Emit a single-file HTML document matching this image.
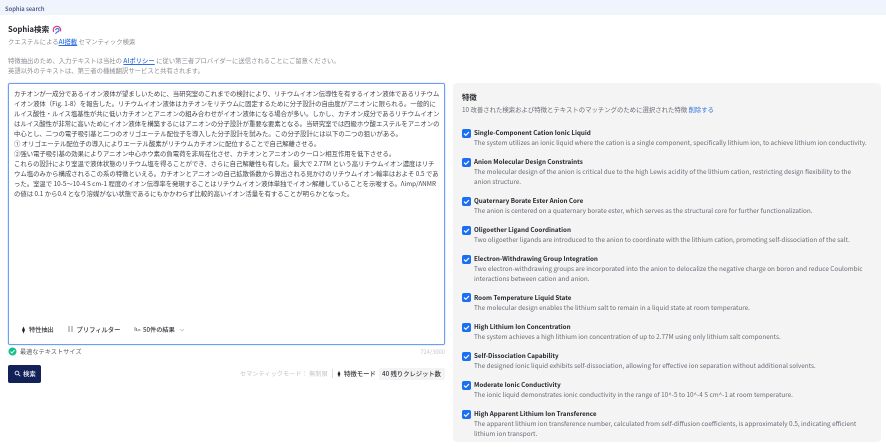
<!DOCTYPE html>
<html lang="ja"><head><meta charset="utf-8"><title>Sophia search</title>
<style>
html,body{margin:0;padding:0;background:#fff}
body{width:886px;height:447px;position:relative;overflow:hidden;font-family:"Noto Sans CJK JP","Liberation Sans",sans-serif;color:#333;}
#w{position:absolute;left:0;top:0;width:886px;height:447px;filter:blur(.25px)}
.a{position:absolute;white-space:nowrap;line-height:10px}
.l{position:absolute;left:14px;white-space:nowrap;font-size:6.37px;line-height:10px;color:#3f434a}
.t{position:absolute;left:474px;white-space:nowrap;font-size:6.25px;line-height:10px;font-weight:700;color:#26282d}
.d{position:absolute;left:474px;white-space:nowrap;font-size:6.37px;line-height:10px;color:#686c73}
.c{position:absolute;left:461.5px;width:9px;height:9px;background:#1b6ff2;border-radius:2px}
.c svg{position:absolute;left:0;top:0}
a{color:#2f6fe0;text-decoration:underline}
</style></head><body><div id="w">
<div class="a" style="left:0;top:0;width:886px;height:15px;background:#eff4fd"></div>
<div class="a" style="left:5px;top:3.5px;font-size:5.9px;color:#3f4a78;font-weight:500">Sophia search</div>
<div class="a" style="left:8px;top:24.5px;font-size:7.6px;font-weight:700;color:#26282d">Sophia検索</div>
<svg style="position:absolute;left:51.5px;top:24.5px" width="10" height="10" viewBox="0 0 10 10"><path d="M1.8 7A3.7 3.7 0 1 1 8.4 6.4" fill="none" stroke="#d8408f" stroke-width="1.2"/><path d="M3.6 5.2A1.7 1.7 0 1 1 5.2 6.9L3.4 8.8" fill="none" stroke="#3c6be0" stroke-width="1.1"/></svg>
<div class="a" style="left:8px;top:36.5px;font-size:6.35px;color:#8a8d93">クエステルによる<a href="#" style="font-weight:500">AI搭載</a> セマンティック検索</div>
<div class="a" style="left:8px;top:56px;font-size:6.35px;color:#8a8d93">特徴抽出のため、入力テキストは当社の <a href="#" style="font-weight:500">AIポリシー</a> に従い第三者プロバイダーに送信されることにご留意ください。</div>
<div class="a" style="left:8px;top:65.5px;font-size:6.35px;color:#8a8d93">英語以外のテキストは、第三者の機械翻訳サービスと共有されます。</div>

<div class="a" style="left:8px;top:83px;width:435px;height:260px;border:1px solid #6e9df5;border-radius:2px;box-shadow:0 0 0 .3px #a9c5f8"></div>
<div class="l" style="top:89px">カチオンが一成分であるイオン液体が望ましいために、当研究室のこれまでの検討により、リチウムイオン伝導性を有するイオン液体であるリチウム</div>
<div class="l" style="top:99px">イオン液体（Fig. 1-8）を報告した。リチウムイオン液体はカチオンをリチウムに固定するために分子設計の自由度がアニオンに限られる。一般的に</div>
<div class="l" style="top:109px">ルイス酸性・ルイス塩基性が共に低いカチオンとアニオンの組み合わせがイオン液体になる場合が多い。しかし、カチオン成分であるリチウムイオン</div>
<div class="l" style="top:119px">はルイス酸性が非常に高いためにイオン液体を構築するにはアニオンの分子設計が重要な要素となる。当研究室では四級ホウ酸エステルをアニオンの</div>
<div class="l" style="top:129px">中心とし、二つの電子吸引基と二つのオリゴエーテル配位子を導入した分子設計を試みた。この分子設計には以下の二つの狙いがある。</div>
<div class="l" style="top:139px">① オリゴエーテル配位子の導入によりエーテル酸素がリチウムカチオンに配位することで自己解離させる。</div>
<div class="l" style="top:149px">②強い電子吸引基の効果によりアニオン中心ホウ素の負電荷を非局在化させ、カチオンとアニオンのクーロン相互作用を低下させる。</div>
<div class="l" style="top:159px">これらの設計により室温で液体状態のリチウム塩を得ることができ、さらに自己解離性も有した。最大で 2.77M という高リチウムイオン濃度はリチ</div>
<div class="l" style="top:169px">ウム塩のみから構成されるこの系の特徴といえる。カチオンとアニオンの自己拡散係数から算出される見かけのリチウムイオン輸率はおよそ 0.5 であ</div>
<div class="l" style="top:179px">った。室温で 10-5～10-4 S cm-1 程度のイオン伝導率を発現することはリチウムイオン液体単独でイオン解離していることを示唆する。Λimp/ΛNMR</div>
<div class="l" style="top:189px">の値は 0.1 から0.4 となり溶媒がない状態であるにもかかわらず比較的高いイオン活量を有することが明らかとなった。</div>

<svg style="position:absolute;left:20px;top:326px" width="7" height="8" viewBox="0 0 7 8"><path d="M3.5 .5L5 4 3.5 7.5 2 4Z" fill="#222"/></svg>
<div class="a" style="left:29px;top:325px;font-size:6.2px;font-weight:500;color:#33363b">特性抽出</div>
<svg style="position:absolute;left:67px;top:326px" width="7" height="7" viewBox="0 0 7 7"><path d="M1 1H3M4 1H6M1 3H3M4 3H6M1 5H3M4 5H6" stroke="#888" stroke-width=".9"/></svg>
<div class="a" style="left:76.5px;top:325px;font-size:6.3px;font-weight:500;color:#33363b">プリフィルター</div>
<svg style="position:absolute;left:134px;top:326px" width="7" height="7" viewBox="0 0 7 7"><path d="M1 1V5M2.5 2V5M3.5 5L5 3.5 6.5 4.5" stroke="#777" stroke-width=".8" fill="none"/></svg>
<div class="a" style="left:143px;top:325px;font-size:6.2px;font-weight:500;color:#33363b">50件の結果</div>
<svg style="position:absolute;left:179px;top:328px" width="6" height="4" viewBox="0 0 6 4"><path d="M1 1L3 3 5 1" stroke="#bbb" stroke-width=".7" fill="none"/></svg>

<svg style="position:absolute;left:8px;top:347px" width="9" height="9" viewBox="0 0 9 9"><circle cx="4.5" cy="4.5" r="4" fill="#13c08a"/><path d="M2.5 4.6L4 6 6.6 3.2" stroke="#fff" stroke-width="1" fill="none"/></svg>
<div class="a" style="left:20px;top:347px;font-size:6.2px;color:#5c5f66">最適なテキストサイズ</div>
<div class="a" style="right:441px;top:347px;font-size:5.8px;color:#c4c6ca">724/3000</div>

<div class="a" style="left:8px;top:365px;width:33px;height:18px;background:#122258;border-radius:2px"></div>
<svg style="position:absolute;left:14px;top:370px" width="7" height="7" viewBox="0 0 7 7"><circle cx="3" cy="3" r="1.9" fill="none" stroke="#fff" stroke-width=".8"/><path d="M4.4 4.4L6.2 6.2" stroke="#fff" stroke-width=".8"/></svg>
<div class="a" style="left:23px;top:369px;font-size:6.4px;font-weight:500;color:#fff">検索</div>

<div class="a" style="left:240px;top:369px;font-size:6.2px;color:#c2c4c8">セマンティックモード： 無制限</div>
<div class="a" style="left:332px;top:369px;width:.6px;height:9px;background:#ddd"></div>
<svg style="position:absolute;left:336px;top:370px" width="6" height="8" viewBox="0 0 6 8"><path d="M3 .8L4.4 4 3 7.2 1.6 4Z" fill="#222"/></svg>
<div class="a" style="left:344px;top:369px;font-size:6.4px;font-weight:500;color:#33363b">特徴モード</div>
<div class="a" style="left:379px;top:368px;width:66px;height:12px;background:#f3f3f4;border-radius:2px"></div>
<div class="a" style="left:382px;top:369px;font-size:6.3px;font-weight:500;color:#33363b">40 残りクレジット数</div>

<div class="a" style="left:453px;top:83px;width:428px;height:359px;background:#f4f4f5;border-radius:4px"></div>
<div class="a" style="left:462px;top:92.5px;font-size:7.4px;font-weight:700;color:#26282d">特徴</div>
<div class="a" style="left:462px;top:104.5px;font-size:6.38px;color:#6b6e75">10 改善された検索および特徴とテキストのマッチングのために選択された特徴 <span style="color:#2f6fe0">削除する</span></div>

<div class="c" style="top:129px"><svg width="9" height="9" viewBox="0 0 9 9"><path d="M2 4.6L3.8 6.3 7 3" stroke="#fff" stroke-width="1.2" fill="none"/></svg></div>
<div class="t" style="top:128px">Single-Component Cation Ionic Liquid</div>
<div class="d" style="top:138px">The system utilizes an ionic liquid where the cation is a single component, specifically lithium ion, to achieve lithium ion conductivity.</div>

<div class="c" style="top:158px"><svg width="9" height="9" viewBox="0 0 9 9"><path d="M2 4.6L3.8 6.3 7 3" stroke="#fff" stroke-width="1.2" fill="none"/></svg></div>
<div class="t" style="top:157px">Anion Molecular Design Constraints</div>
<div class="d" style="top:167px">The molecular design of the anion is critical due to the high Lewis acidity of the lithium cation, restricting design flexibility to the</div>
<div class="d" style="top:176.5px">anion structure.</div>

<div class="c" style="top:196.5px"><svg width="9" height="9" viewBox="0 0 9 9"><path d="M2 4.6L3.8 6.3 7 3" stroke="#fff" stroke-width="1.2" fill="none"/></svg></div>
<div class="t" style="top:196px">Quaternary Borate Ester Anion Core</div>
<div class="d" style="top:206px">The anion is centered on a quaternary borate ester, which serves as the structural core for further functionalization.</div>

<div class="c" style="top:225.5px"><svg width="9" height="9" viewBox="0 0 9 9"><path d="M2 4.6L3.8 6.3 7 3" stroke="#fff" stroke-width="1.2" fill="none"/></svg></div>
<div class="t" style="top:225px">Oligoether Ligand Coordination</div>
<div class="d" style="top:235px">Two oligoether ligands are introduced to the anion to coordinate with the lithium cation, promoting self-dissociation of the salt.</div>

<div class="c" style="top:255px"><svg width="9" height="9" viewBox="0 0 9 9"><path d="M2 4.6L3.8 6.3 7 3" stroke="#fff" stroke-width="1.2" fill="none"/></svg></div>
<div class="t" style="top:254px">Electron-Withdrawing Group Integration</div>
<div class="d" style="top:264px">Two electron-withdrawing groups are incorporated into the anion to delocalize the negative charge on boron and reduce Coulombic</div>
<div class="d" style="top:273.5px">interactions between cation and anion.</div>

<div class="c" style="top:293px"><svg width="9" height="9" viewBox="0 0 9 9"><path d="M2 4.6L3.8 6.3 7 3" stroke="#fff" stroke-width="1.2" fill="none"/></svg></div>
<div class="t" style="top:293px">Room Temperature Liquid State</div>
<div class="d" style="top:302.5px">The molecular design enables the lithium salt to remain in a liquid state at room temperature.</div>

<div class="c" style="top:322.5px"><svg width="9" height="9" viewBox="0 0 9 9"><path d="M2 4.6L3.8 6.3 7 3" stroke="#fff" stroke-width="1.2" fill="none"/></svg></div>
<div class="t" style="top:322px">High Lithium Ion Concentration</div>
<div class="d" style="top:331.5px">The system achieves a high lithium ion concentration of up to 2.77M using only lithium salt components.</div>

<div class="c" style="top:351.5px"><svg width="9" height="9" viewBox="0 0 9 9"><path d="M2 4.6L3.8 6.3 7 3" stroke="#fff" stroke-width="1.2" fill="none"/></svg></div>
<div class="t" style="top:351px">Self-Dissociation Capability</div>
<div class="d" style="top:360.5px">The designed ionic liquid exhibits self-dissociation, allowing for effective ion separation without additional solvents.</div>

<div class="c" style="top:381px"><svg width="9" height="9" viewBox="0 0 9 9"><path d="M2 4.6L3.8 6.3 7 3" stroke="#fff" stroke-width="1.2" fill="none"/></svg></div>
<div class="t" style="top:380px">Moderate Ionic Conductivity</div>
<div class="d" style="top:389.5px">The ionic liquid demonstrates ionic conductivity in the range of 10^-5 to 10^-4 S cm^-1 at room temperature.</div>

<div class="c" style="top:410px"><svg width="9" height="9" viewBox="0 0 9 9"><path d="M2 4.6L3.8 6.3 7 3" stroke="#fff" stroke-width="1.2" fill="none"/></svg></div>
<div class="t" style="top:409px">High Apparent Lithium Ion Transference</div>
<div class="d" style="top:419px">The apparent lithium ion transference number, calculated from self-diffusion coefficients, is approximately 0.5, indicating efficient</div>
<div class="d" style="top:428.5px">lithium ion transport.</div>
</div></body></html>
